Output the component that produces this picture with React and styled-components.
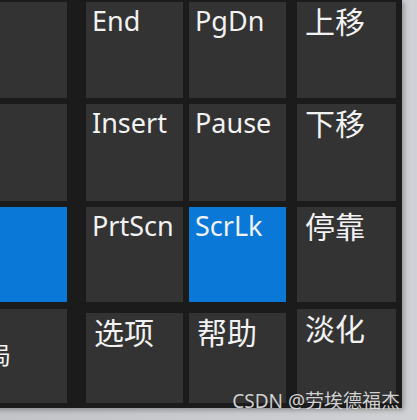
import React from 'react';
import styled, { createGlobalStyle } from 'styled-components';

const Global = createGlobalStyle`
  html, body { margin: 0; padding: 0; }
  body {
    width: 417px;
    height: 420px;
    overflow: hidden;
    background: #c9cbce;
    font-family: "Noto Sans", "Noto Sans CJK SC", sans-serif;
  }
`;

const Screen = styled.div`
  position: relative;
  width: 417px;
  height: 420px;
  overflow: hidden;
  background: linear-gradient(90deg, #c2c4c7 0%, #cfd1d4 100%);
`;

const Keyboard = styled.div`
  display: grid;
  box-sizing: border-box;
  width: 432px;
  height: 408px;
  margin-left: -30px;
  padding: 2px 6px 5px 0;
  background: #1b1b1b;
  grid-template-columns: 97px 19px 97px 6px 97px 11px 99px;
  grid-template-rows: 96px 6px 97px 6px 95px 7px 94px;
  box-shadow: 2px 2px 5px rgba(0, 0, 0, 0.3);
`;

const Key = styled.div`
  grid-column: ${(p) => p.$col * 2 - 1};
  grid-row: ${(p) => p.$row * 2 - 1};
  margin-top: ${(p) => (p.$inset ? '4px' : '0')};
  background: ${(p) => (p.$active ? '#0a78d7' : '#333333')};
  overflow: hidden;
  display: flex;
  align-items: flex-start;
`;

const Label = styled.span`
  display: block;
  color: #f2f2f2;
  font-family: "Noto Sans", "Noto Sans CJK SC", sans-serif;
  font-size: ${(p) => (p.$cjk ? '30px' : '27px')};
  line-height: 1;
  white-space: nowrap;
  padding: ${(p) => (p.$cjk ? '5px 0 0 8px' : '5px 0 0 6px')};
`;

const Fragment = styled.span`
  display: block;
  color: #f2f2f2;
  font-family: "Noto Sans CJK SC", sans-serif;
  font-size: 24px;
  line-height: 1;
  padding: 33px 0 0 17px;
`;

const Watermark = styled.div`
  position: absolute;
  right: 17px;
  bottom: 9px;
  font-family: "Noto Sans", "Noto Sans CJK SC", sans-serif;
  font-size: 19px;
  line-height: 1;
  color: rgba(236, 236, 236, 0.88);
  text-shadow: 0 0 1px rgba(0, 0, 0, 0.4);
  white-space: nowrap;
`;

const keys = [
  { row: 1, col: 1 },
  { row: 1, col: 2, text: 'End' },
  { row: 1, col: 3, text: 'PgDn' },
  { row: 1, col: 4, text: '上移', cjk: true },
  { row: 2, col: 1 },
  { row: 2, col: 2, text: 'Insert' },
  { row: 2, col: 3, text: 'Pause' },
  { row: 2, col: 4, text: '下移', cjk: true },
  { row: 3, col: 1, active: true },
  { row: 3, col: 2, text: 'PrtScn' },
  { row: 3, col: 3, text: 'ScrLk', active: true },
  { row: 3, col: 4, text: '停靠', cjk: true },
  { row: 4, col: 1, fragment: '局' },
  { row: 4, col: 2, text: '选项', cjk: true, inset: true },
  { row: 4, col: 3, text: '帮助', cjk: true, inset: true },
  { row: 4, col: 4, text: '淡化', cjk: true },
];

export default function App() {
  return (
    <Screen>
      <Global />
      <Keyboard>
        {keys.map((k) => (
          <Key key={`${k.row}-${k.col}`} $row={k.row} $col={k.col} $active={k.active} $inset={k.inset}>
            {k.text && <Label $cjk={k.cjk}>{k.text}</Label>}
            {k.fragment && <Fragment>{k.fragment}</Fragment>}
          </Key>
        ))}
      </Keyboard>
      <Watermark>CSDN @劳埃德福杰</Watermark>
    </Screen>
  );
}
